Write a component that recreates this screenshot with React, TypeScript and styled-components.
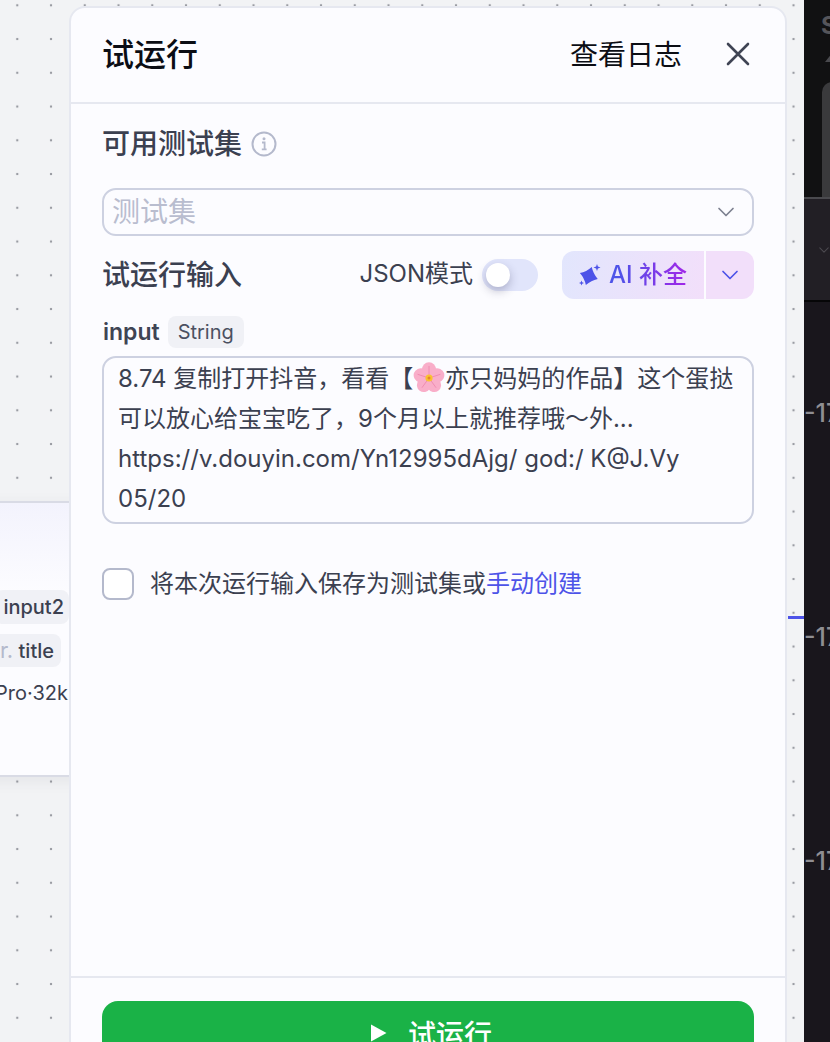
import React from 'react';
import styled, { createGlobalStyle } from 'styled-components';

const FONT = 'Inter, "Noto Sans CJK SC", sans-serif';

const colors = {
  canvas: '#f2f3f5',
  panel: '#fcfcff',
  line: '#e6e8f0',
  inputBorder: '#cdd1e1',
  ink: '#3b4050',
  placeholder: '#b9bdcf',
  link: '#4d53e8',
  green: '#1ab247',
};

const GlobalStyle = createGlobalStyle`
  html, body {
    margin: 0;
    padding: 0;
    height: 100%;
    overflow: hidden;
    background: ${colors.canvas};
  }
  * {
    box-sizing: border-box;
  }
`;

const Chevron: React.FC<{ color: string; size: number }> = ({ color, size }) => (
  <svg width={size} height={size} viewBox="0 0 20 20" fill="none">
    <path d="M3 6.5L10 13.5L17 6.5" stroke={color} strokeWidth="1.7" strokeLinecap="round" strokeLinejoin="round" />
  </svg>
);

const Flower = () => (
  <FlowerIcon viewBox="0 0 32 32">
    {[0, 72, 144, 216, 288].map((angle) => (
      <ellipse key={angle} cx="16" cy="8.2" rx="7.2" ry="8" fill="#f9aec9" transform={`rotate(${angle} 16 16)`} />
    ))}
    {[0, 72, 144, 216, 288].map((angle) => (
      <path key={angle} d="M16 14V4" stroke="#ee86ad" strokeWidth="0.8" transform={`rotate(${angle} 16 16)`} />
    ))}
    <circle cx="16" cy="16" r="3.6" fill="#f9c22e" />
    <circle cx="16" cy="16" r="1.5" fill="#e8842a" />
  </FlowerIcon>
);

const App: React.FC = () => (
  <Root>
    <GlobalStyle />
    <Canvas>
      <WorkflowNode>
        <NodeParam>input2</NodeParam>
        <NodeOutput>
          <Faded>Str.</Faded> title
        </NodeOutput>
        <NodeModel>Kimi Pro·32k</NodeModel>
      </WorkflowNode>
      <Connector />
      <Panel>
        <Header>
          <Title>试运行</Title>
          <HeaderActions>
            <LogLink>查看日志</LogLink>
            <svg width="26" height="26" viewBox="0 0 26 26" fill="none">
              <path d="M3 3L23 23M23 3L3 23" stroke="#3f4454" strokeWidth="2.6" strokeLinecap="round" />
            </svg>
          </HeaderActions>
        </Header>
        <Body>
          <SectionTitleRow>
            <SectionTitle>可用测试集</SectionTitle>
            <svg width="26" height="26" viewBox="0 0 26 26" fill="none">
              <circle cx="13" cy="13" r="11.5" stroke="#b4b9cc" strokeWidth="2" />
              <path d="M11 11.5H13.6V18M10.8 18.4H15.6" stroke="#b4b9cc" strokeWidth="1.8" />
              <circle cx="13" cy="7.8" r="1.5" fill="#b4b9cc" />
            </svg>
          </SectionTitleRow>
          <Select>
            <Placeholder>测试集</Placeholder>
            <Chevron color="#7d8190" size={20} />
          </Select>
          <InputHeader>
            <SectionTitle>试运行输入</SectionTitle>
            <InputTools>
              <ModeLabel>JSON模式</ModeLabel>
              <Switch>
                <Thumb />
              </Switch>
              <AiButtons>
                <AiMain>
                  <svg width="22" height="22" viewBox="0 0 22 22">
                    <path d="M9.8 2.5Q13.4 8.6 19.2 12Q13.4 15.4 9.8 21.5Q6.2 15.4 0.4 12Q6.2 8.6 9.8 2.5Z" fill="#4d53e8" transform="rotate(18 9.8 12)" />
                    <path d="M18 0L18.9 2.6L21.5 3.5L18.9 4.4L18 7L17.1 4.4L14.5 3.5L17.1 2.6Z" fill="#4d53e8" />
                    <path d="M2.5 16.5L3.2 18.3L5 19L3.2 19.7L2.5 21.5L1.8 19.7L0 19L1.8 18.3Z" fill="#4d53e8" />
                  </svg>
                  <AiLabel>AI 补全</AiLabel>
                </AiMain>
                <AiMore>
                  <Chevron color="#4d53e8" size={20} />
                </AiMore>
              </AiButtons>
            </InputTools>
          </InputHeader>
          <FieldLabel>
            <FieldName>input</FieldName>
            <TypeTag>String</TypeTag>
          </FieldLabel>
          <TextBox>
            8.74 复制打开抖音，看看【<Flower />亦只妈妈的作品】这个蛋挞
            <br />
            可以放心给宝宝吃了，9个月以上就推荐哦～外...
            <br />
            https://v.douyin.com/Yn12995dAjg/ god:/ K@J.Vy
            <br />
            05/20
          </TextBox>
          <SaveRow>
            <Checkbox />
            <SaveText>
              将本次运行输入保存为测试集或<SaveLink>手动创建</SaveLink>
            </SaveText>
          </SaveRow>
        </Body>
        <Footer>
          <RunButton>
            <svg width="18" height="20" viewBox="0 0 18 20">
              <path d="M1 1.5L16.5 10L1 18.5Z" fill="#fff" />
            </svg>
            试运行
          </RunButton>
        </Footer>
      </Panel>
    </Canvas>
    <DarkColumn>
      <DarkTop>
        <DarkGlyph>S</DarkGlyph>
        <svg width="8" height="10" viewBox="0 0 8 10">
          <path d="M8 0V10H0Z" fill="#4a4a4e" />
        </svg>
        <DarkBar />
      </DarkTop>
      <DarkMiddle>
        <Chevron color="#4c4a50" size={28} />
      </DarkMiddle>
      <DarkBottom>
        <AxisLabel>-17</AxisLabel>
        <AxisLabel>-17</AxisLabel>
        <AxisLabel>-17</AxisLabel>
      </DarkBottom>
    </DarkColumn>
  </Root>
);

const Root = styled.div`
  display: flex;
  width: 830px;
  height: 1042px;
  overflow: hidden;
  font-family: ${FONT};
`;

const Canvas = styled.div`
  position: relative;
  flex: 0 0 804px;
  height: 100%;
  padding: 6px 0 0 69px;
  overflow: hidden;
  background-color: ${colors.canvas};
  background-image: radial-gradient(circle at center, #9a9ca3 0, #9a9ca3 1.1px, transparent 1.6px);
  background-size: 33.75px 33.75px;
  background-position: 0.4px -11.6px;
`;

const WorkflowNode = styled.div`
  position: absolute;
  top: 501px;
  left: -200px;
  width: 300px;
  height: 276px;
  padding: 87px 39px 0 0;
  display: flex;
  flex-direction: column;
  align-items: flex-end;
  gap: 10px;
  border-top: 2px solid #d9dbe5;
  border-bottom: 2px solid #d9dbe5;
  background: linear-gradient(180deg, #f3f3fd 0, #fcfcff 90px);
  box-shadow: 0 4px 14px rgba(60, 60, 80, 0.08);
  font-size: 20px;
  color: ${colors.ink};
`;

const NodeParam = styled.div`
  height: 34px;
  margin-right: -8px;
  padding: 0 5px 0 8px;
  line-height: 34px;
  border-radius: 8px;
  background: #f0f1f6;
  font-weight: 500;
`;

const NodeOutput = styled.div`
  height: 33px;
  padding: 0 7px;
  line-height: 33px;
  border-radius: 8px;
  background: #f0f1f6;
  font-weight: 500;
`;

const Faded = styled.span`
  color: #b4b9cc;
  font-size: 22px;
  font-weight: 400;
`;

const NodeModel = styled.div`
  line-height: 33px;
  margin-right: -7px;
  white-space: nowrap;
`;

const Connector = styled.div`
  position: absolute;
  top: 616px;
  left: 788px;
  width: 16px;
  height: 3px;
  background: #4d53e8;
`;

const Panel = styled.div`
  position: relative;
  display: flex;
  flex-direction: column;
  width: 718px;
  height: 1081px;
  border: 2px solid ${colors.line};
  border-radius: 16px;
  background: ${colors.panel};
`;

const Header = styled.div`
  display: flex;
  align-items: center;
  justify-content: space-between;
  height: 96px;
  padding: 0 34px 3px 31px;
  border-bottom: 2px solid ${colors.line};
`;

const Title = styled.div`
  font-size: 32px;
  padding-bottom: 3px;
  font-weight: 500;
  color: #0b0d14;
`;

const HeaderActions = styled.div`
  display: flex;
  align-items: center;
  gap: 43px;
`;

const LogLink = styled.div`
  font-size: 28px;
  padding-bottom: 1px;
  color: #0b0d14;
`;

const Body = styled.div`
  flex: 1;
  padding: 0 31px;
`;

const SectionTitleRow = styled.div`
  display: flex;
  align-items: center;
  gap: 9px;
  height: 40px;
  margin-top: 20px;
`;

const SectionTitle = styled.div`
  font-size: 28px;
  line-height: 40px;
  font-weight: 500;
  color: ${colors.ink};
`;

const Select = styled.div`
  display: flex;
  align-items: center;
  justify-content: space-between;
  height: 48px;
  margin-top: 24px;
  padding: 0 16px 0 8px;
  border: 2px solid ${colors.inputBorder};
  border-radius: 14px;
`;

const Placeholder = styled.span`
  font-size: 28px;
  line-height: 40px;
  color: ${colors.placeholder};
`;

const InputHeader = styled.div`
  display: flex;
  align-items: center;
  justify-content: space-between;
  height: 48px;
  margin-top: 15px;
`;

const InputTools = styled.div`
  display: flex;
  align-items: center;
`;

const ModeLabel = styled.span`
  font-size: 24px;
  line-height: 32px;
  padding-bottom: 2px;
  padding-left: 1px;
  color: ${colors.ink};
`;

const Switch = styled.div`
  position: relative;
  width: 56px;
  height: 32px;
  margin: 0 24px 0 9px;
  border-radius: 16px;
  background: #e1e5fb;
`;

const Thumb = styled.div`
  position: absolute;
  top: 4px;
  left: 4px;
  width: 24px;
  height: 24px;
  border-radius: 50%;
  background: #fff;
  box-shadow: 0 4px 10px rgba(50, 50, 90, 0.3);
`;

const AiButtons = styled.div`
  display: flex;
  gap: 2px;
  height: 48px;
  border-radius: 12px;
  overflow: hidden;
`;

const AiMain = styled.div`
  display: flex;
  align-items: center;
  gap: 8px;
  width: 142px;
  padding-left: 17px;
  background: linear-gradient(100deg, #e2e6fd 0%, #f2dffa 100%);
`;

const AiLabel = styled.span`
  font-size: 24px;
  line-height: 32px;
  padding-bottom: 1px;
  font-weight: 500;
  white-space: pre;
  background: linear-gradient(90deg, #4d53e8 10%, #a126e8 100%);
  -webkit-background-clip: text;
  background-clip: text;
  color: transparent;
`;

const AiMore = styled.div`
  display: flex;
  align-items: center;
  justify-content: center;
  width: 48px;
  background: #f2dffa;
`;

const FieldLabel = styled.div`
  display: flex;
  align-items: center;
  gap: 8px;
  height: 32px;
  margin-top: 17px;
  padding-left: 1px;
`;

const FieldName = styled.span`
  font-size: 23px;
  font-weight: 600;
  color: #3f4454;
`;

const TypeTag = styled.span`
  height: 32px;
  padding: 0 10px;
  line-height: 32px;
  border-radius: 8px;
  background: #f0f1f6;
  font-size: 20px;
  color: #4b5061;
`;

const TextBox = styled.div`
  height: 168px;
  margin-top: 8px;
  padding: 1px 14px 0;
  border: 2px solid ${colors.inputBorder};
  border-radius: 14px;
  font-size: 24px;
  line-height: 40px;
  color: ${colors.ink};
  white-space: nowrap;
  overflow: hidden;
`;

const FlowerIcon = styled.svg`
  width: 32px;
  height: 32px;
  vertical-align: -7px;
`;

const SaveRow = styled.div`
  display: flex;
  align-items: center;
  gap: 16px;
  height: 32px;
  margin-top: 44px;
`;

const Checkbox = styled.div`
  width: 32px;
  height: 32px;
  border: 2px solid #b4b9cc;
  border-radius: 8px;
  background: #fff;
`;

const SaveText = styled.span`
  font-size: 24px;
  line-height: 32px;
  padding-bottom: 1px;
  color: ${colors.ink};
`;

const SaveLink = styled.span`
  color: ${colors.link};
`;

const Footer = styled.div`
  height: 109px;
  padding: 23px 31px 0;
  border-top: 2px solid ${colors.line};
`;

const RunButton = styled.div`
  display: flex;
  align-items: center;
  justify-content: center;
  gap: 20px;
  height: 64px;
  padding-left: 6px;
  border-radius: 16px;
  background: ${colors.green};
  font-size: 28px;
  font-weight: 500;
  color: #fff;
`;

const DarkColumn = styled.div`
  display: flex;
  flex-direction: column;
  flex: 0 0 26px;
  height: 100%;
  overflow: hidden;
`;

const DarkTop = styled.div`
  position: relative;
  flex: 0 0 199px;
  padding: 52px 0 0 21px;
  background: #111112;
  border-bottom: 2px solid #4a4a4e;
  line-height: 0;
`;

const DarkGlyph = styled.div`
  position: absolute;
  top: 12px;
  left: 17px;
  font-size: 24px;
  line-height: 28px;
  font-weight: 700;
  color: #55555a;
`;

const DarkBar = styled.div`
  width: 40px;
  height: 115px;
  margin: 20px 0 0 -3px;
  border-radius: 10px 10px 0 0;
  background: #3a3a3c;
`;

const DarkMiddle = styled.div`
  display: flex;
  align-items: center;
  flex: 0 0 103px;
  padding-left: 14px;
  background: #221f25;
  border-bottom: 2px solid #060607;
`;

const DarkBottom = styled.div`
  flex: 1;
  min-height: 0;
  padding-top: 93px;
  background: #19161c;
`;

const AxisLabel = styled.div`
  height: 224px;
  font-size: 25px;
  font-weight: 500;
  line-height: 36px;
  color: #8f8e92;
  white-space: nowrap;
`;

export default App;
